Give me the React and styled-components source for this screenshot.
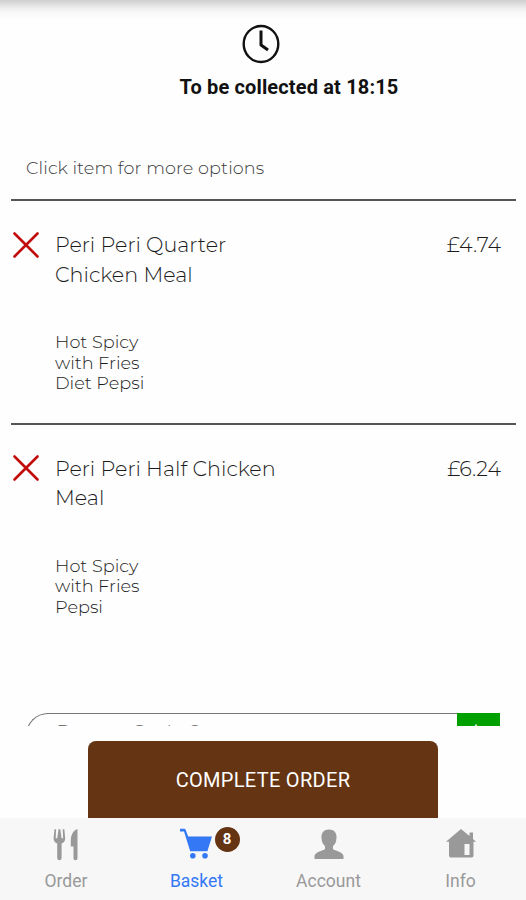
import React from "react";
import styled, { createGlobalStyle } from "styled-components";

const GlobalStyle = createGlobalStyle`
  * {
    box-sizing: border-box;
  }
  body {
    margin: 0;
    background: #fefefe;
    font-family: Roboto, sans-serif;
  }
`;

const Screen = styled.div`
  width: 526px;
  height: 900px;
  display: flex;
  flex-direction: column;
  overflow: hidden;
  background: #fefefe;
`;

const Content = styled.main`
  height: 726px;
  flex-shrink: 0;
  overflow: hidden;
  font-family: Montserrat, Inter, sans-serif;
  font-weight: 300;
  color: #1c1c1c;
  background: linear-gradient(#cfcfcf 0, #dedede 4px, #f1f1f1 9px, #fafafa 14px, #fefefe 20px);
`;

const Collection = styled.div`
  height: 145px;
  padding-top: 24px;
  display: flex;
  flex-direction: column;
  align-items: center;
  svg {
    display: block;
    margin-right: 4px;
  }
`;

const CollectTime = styled.div`
  margin: 10px 0 0 52px;
  font-family: Roboto, sans-serif;
  font-size: 20px;
  font-weight: 700;
  line-height: 26px;
  letter-spacing: 0.15px;
  color: #111;
  white-space: nowrap;
`;

const Hint = styled.div`
  height: 54px;
  padding: 11px 26px 0;
  font-size: 17.6px;
  line-height: 24px;
  letter-spacing: 0.1px;
  color: #3c3c3c;
`;

const Item = styled.div`
  height: ${(props) => props.$height};
  margin: 0 10px 0 11px;
  padding: 29px 15px 0 2px;
  border-top: 2px solid #555;
  display: grid;
  grid-template-columns: 42px 1fr auto;
  align-content: start;
  svg {
    display: block;
    margin-top: 1.5px;
  }
`;

const ItemName = styled.div`
  font-size: 20.7px;
  line-height: 29.5px;
`;

const Price = styled.div`
  font-size: 20.7px;
  line-height: 29px;
`;

const Options = styled.div`
  grid-column: 2;
  margin-top: 43px;
  font-size: 17.7px;
  line-height: 20.5px;
`;

const Promo = styled.div`
  width: 474px;
  height: 52px;
  margin-left: 26px;
  display: flex;
  justify-content: space-between;
  border-top: 1px solid #777;
  border-left: 1px solid #777;
  border-radius: 22px 0 0 22px;
`;

const PromoText = styled.div`
  padding: 5px 0 0 29px;
  font-size: 20.7px;
  line-height: 28px;
  color: #777;
`;

const Add = styled.div`
  width: 43px;
  margin-top: -1px;
  padding-right: 5px;
  background: #00a000;
  color: #fff;
  font-size: 26px;
  font-weight: 400;
  line-height: 35px;
  text-align: center;
`;

const Action = styled.div`
  height: 92px;
  flex-shrink: 0;
  padding-top: 15px;
  display: flex;
  justify-content: center;
`;

const CompleteButton = styled.button`
  width: 350px;
  height: 77px;
  padding: 1px 0 0;
  border: 0;
  border-radius: 8px 8px 0 0;
  background: #643413;
  color: #fff;
  font-family: Roboto, sans-serif;
  font-size: 20px;
  letter-spacing: 0.3px;
`;

const TabBar = styled.nav`
  height: 82px;
  display: grid;
  grid-template-columns: 132px 129px 135px 129px;
  background: #f7f7f7;
`;

const Tab = styled.div`
  display: flex;
  flex-direction: column;
  align-items: center;
  padding-top: 10px;
  color: ${(props) => (props.$active ? "#3478f6" : "#999")};
  font-size: 17.5px;
  line-height: 22px;
`;

const TabIcon = styled.div`
  position: relative;
  height: 42px;
  svg {
    display: block;
  }
`;

const Badge = styled.span`
  position: absolute;
  left: 35px;
  top: -1px;
  width: 25px;
  height: 25px;
  border-radius: 50%;
  background: #643413;
  color: #fff;
  font-size: 15px;
  font-weight: 700;
  line-height: 25px;
  text-align: center;
`;

const items = [
  {
    name: ["Peri Peri Quarter", "Chicken Meal"],
    price: "£4.74",
    options: ["Hot Spicy", "with Fries", "Diet Pepsi"],
    height: "223.5px",
  },
  {
    name: ["Peri Peri Half Chicken", "Meal"],
    price: "£6.24",
    options: ["Hot Spicy", "with Fries", "Pepsi"],
    height: "290px",
  },
];

const ClockIcon = () => (
  <svg width="38" height="40" viewBox="0 0 38 40" fill="none" stroke="#111">
    <ellipse cx="19" cy="20" rx="17.3" ry="18" strokeWidth="2.4" />
    <path d="M19 6.5V21l7 5" strokeWidth="3" strokeLinejoin="round" />
  </svg>
);

const RemoveIcon = () => (
  <svg width="26" height="26" viewBox="0 0 26 26" fill="none" stroke="#c20d0d">
    <path d="M1.5 1.5l23 23M24.5 1.5l-23 23" strokeWidth="2.6" strokeLinecap="round" />
  </svg>
);

const ForkIcon = () => (
  <svg width="26" height="33" viewBox="0 0 26 33" fill="currentColor">
    <path d="M1.5 1.2L.6 10c-.2 3 1.4 4.7 3.6 5.4V30a2.2 2.2 0 0 0 4.4 0V15.4c2.2-.7 3.8-2.4 3.6-5.4l-.9-8.8H9.7l.4 9H8.6L7.3 1.2H5.5l-1.3 9H2.7l.4-9z" />
    <path d="M24.5 1v29.2a2 2 0 0 1-4 0V18.5h-2.7V13c0-5.5 2-10.5 6.7-12z" />
  </svg>
);

const CartIcon = () => (
  <svg width="34" height="33" viewBox="0 0 34 33" fill="currentColor">
    <path d="M0 .8h4.2q1 0 1.4 1l2.6 6.7H32L27.4 23.3H10.2L4 3.5H0z" />
    <circle cx="12.8" cy="27.7" r="2.8" />
    <circle cx="25" cy="27.7" r="2.8" />
  </svg>
);

const AccountIcon = () => (
  <svg width="30" height="33" viewBox="0 0 30 33" fill="currentColor">
    <path d="M15 1.5c-5 0-8 3.3-7.5 8.5.3 4.5 1.7 6.5 3.5 8v2.7c0 2-9.5 2.3-10.5 7V31h29v-3.3c-1-4.7-10.5-5-10.5-7V18c1.8-1.5 3.2-3.5 3.5-8 .5-5.2-2.5-8.5-7.5-8.5z" />
  </svg>
);

const HomeIcon = () => (
  <svg width="30" height="33" viewBox="0 0 30 33" fill="currentColor">
    <path
      fillRule="evenodd"
      d="M15 1l8.5 7V4.5H27V11l3 2.7h-2.5v14q0 1.8-1.8 1.8H4.8Q3 29.5 3 27.7v-14H0zM18.5 16v11h5V16z"
    />
  </svg>
);

const App = () => {
  return (
    <>
      <GlobalStyle />
      <Screen>
        <Content>
          <Collection>
            <ClockIcon />
            <CollectTime>To be collected at 18:15</CollectTime>
          </Collection>
          <Hint>Click item for more options</Hint>
          {items.map((item) => (
            <Item key={item.price} $height={item.height}>
              <RemoveIcon />
              <ItemName>
                {item.name.map((line) => (
                  <div key={line}>{line}</div>
                ))}
              </ItemName>
              <Price>{item.price}</Price>
              <Options>
                {item.options.map((option) => (
                  <div key={option}>{option}</div>
                ))}
              </Options>
            </Item>
          ))}
          <Promo>
            <PromoText>Promo Code ?</PromoText>
            <Add>+</Add>
          </Promo>
        </Content>
        <Action>
          <CompleteButton>COMPLETE ORDER</CompleteButton>
        </Action>
        <TabBar>
          <Tab>
            <TabIcon>
              <ForkIcon />
            </TabIcon>
            Order
          </Tab>
          <Tab $active>
            <TabIcon>
              <CartIcon />
              <Badge>8</Badge>
            </TabIcon>
            Basket
          </Tab>
          <Tab>
            <TabIcon>
              <AccountIcon />
            </TabIcon>
            Account
          </Tab>
          <Tab>
            <TabIcon>
              <HomeIcon />
            </TabIcon>
            Info
          </Tab>
        </TabBar>
      </Screen>
    </>
  );
};

export default App;
